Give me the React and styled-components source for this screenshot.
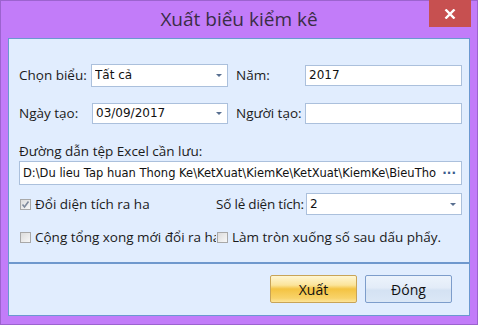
import styled, { createGlobalStyle } from 'styled-components';

const GlobalStyle = createGlobalStyle`
  body {
    margin: 0;
    font-family: "Open Sans", "Liberation Sans", sans-serif;
  }
`;

const Window = styled.div`
  width: 478px;
  height: 325px;
  box-sizing: border-box;
  background: #c27cf9;
  border: 1px solid #9c63cf;
  display: flex;
  flex-direction: column;
  padding: 0 7px 8px 7px;
`;

const TitleBar = styled.div`
  height: 37px;
  flex: none;
  position: relative;
  display: flex;
  align-items: center;
  justify-content: center;
`;

const Title = styled.div`
  font-size: 19px;
  color: #3a2d45;
  margin-top: -2px;
`;

const CloseButton = styled.div`
  position: absolute;
  right: -1px;
  top: -1px;
  width: 42px;
  height: 27px;
  background: #c75050;
  display: flex;
  align-items: center;
  justify-content: center;
`;

const Client = styled.div`
  flex: 1;
  background: #e1edfe;
  border: 1px solid #6b98d0;
  display: flex;
  flex-direction: column;
  font-size: 13.5px;
  color: #1b1b1b;
`;

const Body = styled.div`
  padding: 24px 7px 0 10px;
  display: flex;
  flex-direction: column;
`;

const Row = styled.div`
  display: flex;
  align-items: center;
  height: ${p => p.h || 24}px;
  margin-bottom: ${p => p.mb || 0}px;
`;

const Label = styled.div`
  width: ${p => p.w}px;
  flex: none;
  white-space: nowrap;
  margin-left: ${p => p.ml || 0}px;
  letter-spacing: ${p => p.tight ? '-0.2px' : 'normal'};
`;

const Field = styled.div`
  width: ${p => p.w ? `${p.w}px` : 'auto'};
  flex: ${p => p.w ? 'none' : 1};
  height: ${p => p.h || 21}px;
  box-sizing: border-box;
  background: #fff;
  border: 1px solid #abc0dc;
  display: flex;
  align-items: center;
  padding: 0 5px 0 3px;
  white-space: nowrap;
  overflow: hidden;
  font-family: "DejaVu Sans", sans-serif;
  font-size: ${p => p.fs || 12}px;
  color: #111;
`;

const FieldText = styled.span`
  flex: 1;
  overflow: hidden;
`;

const Arrow = styled.span`
  width: 0;
  height: 0;
  border-left: 3px solid transparent;
  border-right: 3px solid transparent;
  border-top: 3px solid #586f90;
  flex: none;
`;

const Dots = styled.span`
  color: #3b5b8c;
  font-size: 12px;
  flex: none;
  margin-left: 6px;
  font-weight: bold;
`;

const Check = styled.label`
  display: flex;
  align-items: center;
  gap: 4px;
  width: ${p => p.w}px;
  flex: none;
  white-space: nowrap;
  overflow: hidden;
`;

const Box = styled.span`
  width: 11px;
  height: 11px;
  flex: none;
  box-sizing: border-box;
  border: 1px solid #a8a8a8;
  background: linear-gradient(135deg, #dcdcdc, #f7f7f7);
  display: flex;
  align-items: center;
  justify-content: center;
  margin-left: 1px;
`;

const Separator = styled.div`
  margin-top: auto;
  border-top: 2px solid #6e98cd;
`;

const Footer = styled.div`
  display: flex;
  justify-content: flex-end;
  gap: 8px;
  padding: 11px 17px 12px 0;
`;

const Button = styled.div`
  width: 87px;
  height: 28px;
  box-sizing: border-box;
  border-radius: 2px;
  display: flex;
  align-items: center;
  justify-content: center;
  font-size: 14px;
  color: #111;
  border: 1px solid ${p => p.primary ? '#c8a458' : '#7d9dcb'};
  background: ${p => p.primary
    ? 'linear-gradient(#fff6d2 0%, #fbe49a 35%, #f4c342 50%, #f8d36a 85%, #fde49a 100%)'
    : 'linear-gradient(#ecf3fc 0%, #e3ecf8 45%, #d4e2f3 55%, #dbe7f6 100%)'};
`;

export default function App() {
  return (
    <>
      <GlobalStyle />
      <Window>
        <TitleBar>
          <Title>Xuất biểu kiểm kê</Title>
          <CloseButton>
            <svg width="12" height="10" viewBox="0 0 12 10">
              <path d="M1.5 0.5 L10.5 9.5 M10.5 0.5 L1.5 9.5" stroke="#fff" strokeWidth="2.4" />
            </svg>
          </CloseButton>
        </TitleBar>
        <Client>
          <Body>
            <Row mb={14}>
              <Label w={72}>Chọn biểu:</Label>
              <Field w={137} h={23}>
                <FieldText>Tất cả</FieldText>
                <Arrow />
              </Field>
              <Label w={69} ml={8}>Năm:</Label>
              <Field w={157}>
                <FieldText>2017</FieldText>
              </Field>
            </Row>
            <Row mb={16}>
              <Label w={73}>Ngày tạo:</Label>
              <Field w={136}>
                <FieldText>03/09/2017</FieldText>
                <Arrow />
              </Field>
              <Label w={69} ml={8}>Người tạo:</Label>
              <Field w={157} />
            </Row>
            <Row h={20}>
              <Label>Đường dẫn tệp Excel cần lưu:</Label>
            </Row>
            <Row h={24} mb={8}>
              <Field h={24} fs={11.5}>
                <FieldText>D:\Du lieu Tap huan Thong Ke\KetXuat\KiemKe\KetXuat\KiemKe\BieuThong</FieldText>
                <Dots>···</Dots>
              </Field>
            </Row>
            <Row h={22} mb={11}>
              <Check w={197}>
                <Box>
                  <svg width="9" height="9" viewBox="0 0 9 9">
                    <path d="M1.5 4.5 L3.5 7 L7.5 1.5" stroke="#7f8a9c" strokeWidth="1.6" fill="none" />
                  </svg>
                </Box>
                Đổi diện tích ra ha
              </Check>
              <Label w={90} tight>Số lẻ diện tích:</Label>
              <Field h={22}>
                <FieldText>2</FieldText>
                <Arrow />
              </Field>
            </Row>
            <Row h={22}>
              <Check w={197}>
                <Box />
                Cộng tổng xong mới đổi ra ha
              </Check>
              <Check w={240}>
                <Box />
                Làm tròn xuống số sau dấu phẩy.
              </Check>
            </Row>
          </Body>
          <Separator />
          <Footer>
            <Button primary>Xuất</Button>
            <Button>Đóng</Button>
          </Footer>
        </Client>
      </Window>
    </>
  );
}
